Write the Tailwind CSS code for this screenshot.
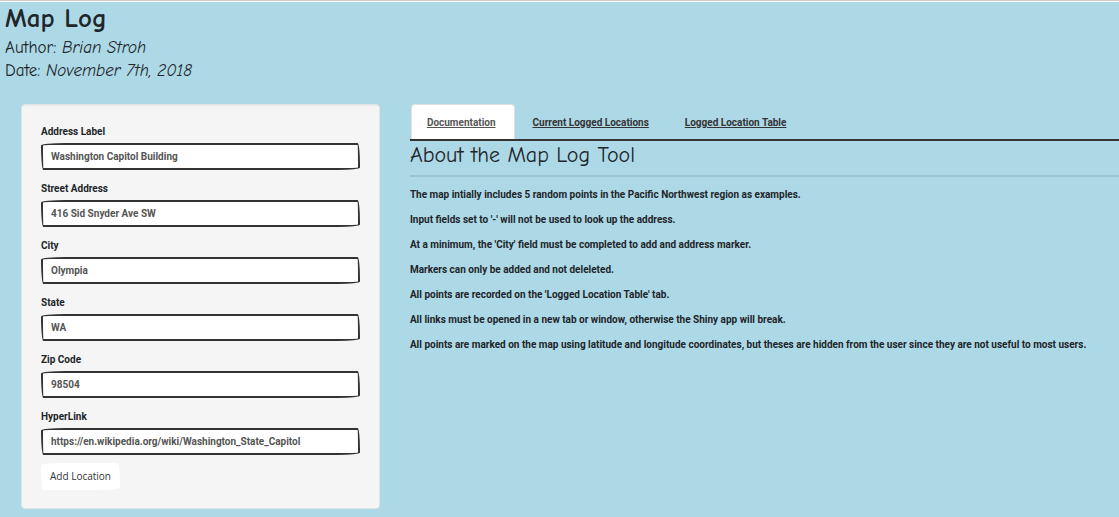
<!DOCTYPE html>
<html lang="en">
<head>
<meta charset="utf-8">
<meta name="viewport" content="width=device-width, initial-scale=1">
<title>Map Log</title>
<script src="https://cdn.jsdelivr.net/npm/@tailwindcss/browser@4"></script>
</head>
<body class="min-h-screen overflow-x-hidden border-t border-[#cfcfcf] bg-[#add8e6] font-[Roboto,sans-serif] text-[10px] leading-[15px] font-bold text-[#212529]">
<div class="border-t border-white pl-[5px]">
  <header class="font-['Comic_Sans_MS','Comic_Neue','Open_Sans',sans-serif] font-normal">
    <h1 class="text-[27px] leading-[34px] font-bold">Map Log</h1>
    <h4 class="text-[17px] leading-[23px]">Author: <em>Brian Stroh</em></h4>
    <h4 class="text-[17px] leading-[23px]">Date: <em>November 7th, 2018</em></h4>
  </header>
  <main class="grid grid-cols-[minmax(0,35fr)_minmax(0,65fr)] items-start pt-[22px]">
    <div class="pr-[15px] pl-4">
      <form class="flex flex-col gap-2 rounded-[4px] border border-[#e0e4e5] bg-[#f5f5f5] px-[19px] py-[18px] shadow-[inset_0_1px_1px_rgba(0,0,0,0.05)]">
        <div class="flex flex-col gap-[10px]">
          <div class="flex flex-col gap-[3px]">
            <label for="label" class="leading-[17px]">Address Label</label>
            <input id="label" type="text" value="Washington Capitol Building" class="h-[27px] w-full rounded-[255px_25px_225px_25px/25px_225px_25px_255px] border-2 border-[#333] bg-white px-2 text-[#555]">
          </div>
          <div class="flex flex-col gap-[3px]">
            <label for="street" class="leading-[17px]">Street Address</label>
            <input id="street" type="text" value="416 Sid Snyder Ave SW" class="h-[27px] w-full rounded-[255px_25px_225px_25px/25px_225px_25px_255px] border-2 border-[#333] bg-white px-2 text-[#555]">
          </div>
          <div class="flex flex-col gap-[3px]">
            <label for="city" class="leading-[17px]">City</label>
            <input id="city" type="text" value="Olympia" class="h-[27px] w-full rounded-[255px_25px_225px_25px/25px_225px_25px_255px] border-2 border-[#333] bg-white px-2 text-[#555]">
          </div>
          <div class="flex flex-col gap-[3px]">
            <label for="state" class="leading-[17px]">State</label>
            <input id="state" type="text" value="WA" class="h-[27px] w-full rounded-[255px_25px_225px_25px/25px_225px_25px_255px] border-2 border-[#333] bg-white px-2 text-[#555]">
          </div>
          <div class="flex flex-col gap-[3px]">
            <label for="zip" class="leading-[17px]">Zip Code</label>
            <input id="zip" type="text" value="98504" class="h-[27px] w-full rounded-[255px_25px_225px_25px/25px_225px_25px_255px] border-2 border-[#333] bg-white px-2 text-[#555]">
          </div>
          <div class="flex flex-col gap-[3px]">
            <label for="link" class="leading-[17px]">HyperLink</label>
            <input id="link" type="text" value="https://en.wikipedia.org/wiki/Washington_State_Capitol" class="h-[27px] w-full rounded-[255px_25px_225px_25px/25px_225px_25px_255px] border-2 border-[#333] bg-white px-2 text-[#555]">
          </div>
        </div>
        <button type="button" class="h-[27px] self-start rounded-[255px_25px_225px_25px/25px_225px_25px_255px] bg-white px-[9px] font-['Open_Sans',sans-serif] font-normal text-[#333]">Add Location</button>
      </form>
    </div>
    <div class="pl-[15px]">
      <nav class="flex gap-[2px] border-b-2 border-[#333] pl-px">
        <a href="#documentation" class="rounded-t-[4px] border border-b-0 border-[#dee2e6] bg-white pt-[10px] pr-[18px] pb-[9px] pl-[15px] text-[#555] underline">Documentation</a>
        <a href="#locations" class="pt-[11px] pr-[18px] pb-[9px] pl-4 text-[#333] underline">Current Logged Locations</a>
        <a href="#table" class="pt-[11px] pr-[18px] pb-[9px] pl-4 text-[#333] underline">Logged Location Table</a>
      </nav>
      <section id="documentation">
        <h2 class="font-['Comic_Sans_MS','Comic_Neue','Open_Sans',sans-serif] text-[22px] leading-[28px] font-normal">About the Map Log Tool</h2>
        <hr class="mt-[6px] mb-[10px] border-t-2 border-[#9cc3d0]">
        <div class="flex flex-col gap-[10px] whitespace-nowrap">
          <p>The map intially includes 5 random points in the Pacific Northwest region as examples.</p>
          <p>Input fields set to '-' will not be used to look up the address.</p>
          <p>At a minimum, the 'City' field must be completed to add and address marker.</p>
          <p>Markers can only be added and not deleleted.</p>
          <p>All points are recorded on the 'Logged Location Table' tab.</p>
          <p>All links must be opened in a new tab or window, otherwise the Shiny app will break.</p>
          <p>All points are marked on the map using latitude and longitude coordinates, but theses are hidden from the user since they are not useful to most users.</p>
        </div>
      </section>
    </div>
  </main>
</div>
</body>
</html>
